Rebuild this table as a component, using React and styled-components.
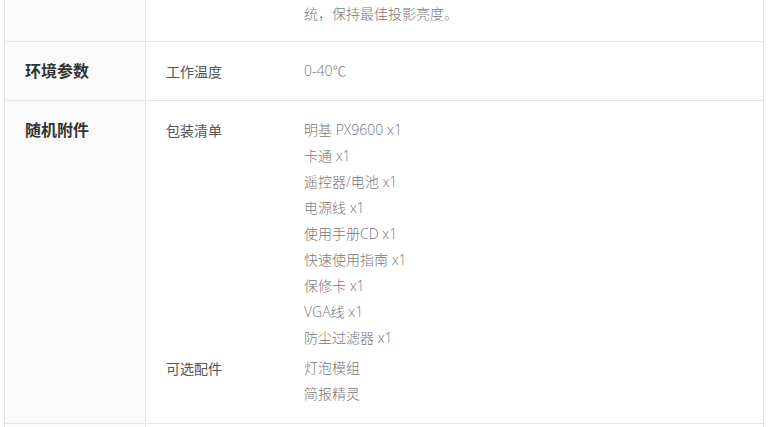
import React from "react";
import styled, { createGlobalStyle } from "styled-components";

const GlobalStyle = createGlobalStyle`
  html, body {
    margin: 0;
    padding: 0;
    background: #fff;
  }
  body {
    font-family: "Noto Sans CJK SC", "Noto Sans", sans-serif;
  }
`;

const specs = [
  {
    title: "",
    cont: true,
    groups: [{ label: "", items: ["统，保持最佳投影亮度。"] }],
  },
  {
    title: "环境参数",
    groups: [{ label: "工作温度", items: ["0-40℃"] }],
  },
  {
    title: "随机附件",
    groups: [
      {
        label: "包装清单",
        items: [
          "明基 PX9600 x1",
          "卡通 x1",
          "遥控器/电池 x1",
          "电源线 x1",
          "使用手册CD x1",
          "快速使用指南 x1",
          "保修卡 x1",
          "VGA线 x1",
          "防尘过滤器 x1",
        ],
      },
      { label: "可选配件", items: ["灯泡模组", "简报精灵"] },
    ],
  },
];

export default function App() {
  return (
    <>
      <GlobalStyle />
      <Table>
        {specs.map((row, i) => (
          <Row key={i}>
            <Heading>{row.title}</Heading>
            <Body $cont={row.cont}>
              {row.groups.map((g, j) => (
                <Group key={j}>
                  <Label>{g.label}</Label>
                  <Values>
                    {g.items.map((it) => (
                      <Value key={it}>{it}</Value>
                    ))}
                  </Values>
                </Group>
              ))}
            </Body>
          </Row>
        ))}
        <Row>
          <Heading />
          <Body />
        </Row>
      </Table>
    </>
  );
}

const Table = styled.div`
  width: 760px;
  margin-left: 4px;
  box-sizing: border-box;
  border-left: 1px solid #e6e6e6;
  border-right: 1px solid #e6e6e6;
`;

const Row = styled.div`
  display: grid;
  grid-template-columns: 141px 1fr;
  border-bottom: 1px solid #e6e6e6;
`;

const Heading = styled.div`
  background: #fafafa;
  border-right: 1px solid #e6e6e6;
  padding: 15px 20px 17px;
  font-size: 16px;
  font-weight: 700;
  line-height: 26px;
  color: #333;
`;

const Body = styled.div`
  padding: ${(p) => (p.$cont ? "1px 20px 14px" : "16px 20px")};
  display: flex;
  flex-direction: column;
  gap: 4px;
`;

const Group = styled.div`
  display: grid;
  grid-template-columns: 138px 1fr;
`;

const Label = styled.div`
  font-size: 14px;
  line-height: 26px;
  color: #555;
`;

const Values = styled.div`
  display: flex;
  flex-direction: column;
`;

const Value = styled.div`
  font-family: "Open Sans", "Noto Sans CJK SC", sans-serif;
  font-size: 14px;
  font-weight: 300;
  line-height: 26px;
  color: #777;
`;
